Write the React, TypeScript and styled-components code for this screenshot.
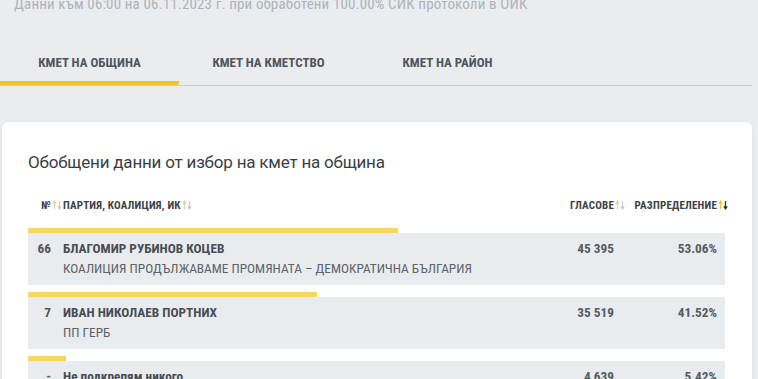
import React from "react";
import styled, { createGlobalStyle } from "styled-components";

const COND = `"Roboto Condensed", "Roboto", "Noto Sans", sans-serif`;

const GlobalStyle = createGlobalStyle`
  html, body { margin: 0; padding: 0; }
  body {
    background: #eaedf0;
    font-family: ${COND};
    font-stretch: condensed;
    overflow: hidden;
  }
`;

const Page = styled.div`
  width: 758px;
  padding-right: 6px;
  box-sizing: border-box;
`;

const Updated = styled.div`
  margin: -5px 0 0 14px;
  font-size: 15px;
  line-height: 18px;
  letter-spacing: 0.15px;
  color: #aeb3b9;
  white-space: nowrap;
`;

const TabBar = styled.nav`
  display: flex;
  margin-top: 27px;
  border-bottom: 1px solid #c9ced3;
`;

const Tab = styled.div<{ $active?: boolean }>`
  width: 179px;
  height: 45px;
  box-sizing: border-box;
  padding-top: 4px;
  display: flex;
  align-items: center;
  justify-content: center;
  font-size: 13px;
  font-weight: 700;
  color: #4f555b;
  border-bottom: 4px solid ${(p) => (p.$active ? "#f6c02c" : "transparent")};
  border-bottom-right-radius: 2px;
`;

const Card = styled.section`
  margin: 36px 0 0 2px;
  background: #fff;
  border-radius: 6px;
  box-shadow: 0 1px 4px rgba(0, 0, 0, 0.06);
  padding: 29px 27px 20px 26px;
`;

const Title = styled.h2`
  margin: 0;
  font-family: Roboto, "Noto Sans", sans-serif;
  font-stretch: normal;
  font-size: 17px;
  line-height: 22px;
  font-weight: 400;
  letter-spacing: -0.2px;
  color: #3a3f44;
`;

const Grid = styled.div`
  display: grid;
  grid-template-columns: 35px 1fr 120px 111px;
  align-items: start;
`;

const HeaderRow = styled(Grid)`
  margin-top: 26px;
  font-size: 11px;
  line-height: 14px;
  font-weight: 700;
  letter-spacing: 0.2px;
  color: #3c4146;
`;

const HeadCell = styled.div<{ $align?: "left" | "right"; $pad?: number }>`
  text-align: ${(p) => p.$align ?? "left"};
  padding-right: ${(p) => p.$pad ?? 0}px;
`;

const Sortable = styled.span`
  position: relative;
  display: inline-block;
`;

const SortIcon = styled.svg`
  position: absolute;
  left: 100%;
  top: 1px;
  margin-left: 1px;
`;

const Body = styled.div`
  display: flex;
  flex-direction: column;
  gap: 7px;
  margin-top: 15px;
`;

const Block = styled.div``;

const Bar = styled.div`
  height: 5px;
  background: #f8d460;
`;

const Row = styled(Grid)`
  background: #e9ecef;
  padding: 7px 0;
  min-height: 38px;
`;

const Num = styled.div`
  text-align: right;
  padding-right: 12px;
  font-size: 13.3px;
  line-height: 18px;
  font-weight: 700;
  color: #4f555b;
`;

const Names = styled.div`
  min-width: 0;
`;

const Name = styled.div`
  font-size: 13.3px;
  line-height: 18px;
  font-weight: 700;
  color: #474d53;
  white-space: nowrap;
`;

const Party = styled.div`
  margin-top: 2px;
  font-size: 13.3px;
  line-height: 18px;
  font-weight: 400;
  color: #5c6268;
  white-space: nowrap;
`;

const Value = styled.div<{ $pad?: number }>`
  text-align: right;
  padding-right: ${(p) => p.$pad ?? 0}px;
  font-size: 13.3px;
  line-height: 18px;
  font-weight: 700;
  color: #555b61;
`;

const Arrows = ({ up, down }: { up: string; down: string }) => (
  <SortIcon width="10" height="10" viewBox="0 0 10 10">
    <path d="M2.5 9V2M0.8 3.6L2.5 1.2L4.2 3.6" stroke={up} strokeWidth="1.3" fill="none" />
    <path d="M7.5 1V8M5.8 6.4L7.5 8.8L9.2 6.4" stroke={down} strokeWidth="1.3" fill="none" />
  </SortIcon>
);

const rows = [
  { n: "66", name: "БЛАГОМИР РУБИНОВ КОЦЕВ", party: "КОАЛИЦИЯ ПРОДЪЛЖАВАМЕ ПРОМЯНАТА – ДЕМОКРАТИЧНА БЪЛГАРИЯ", votes: "45 395", pct: 53.06 },
  { n: "7", name: "ИВАН НИКОЛАЕВ ПОРТНИХ", party: "ПП ГЕРБ", votes: "35 519", pct: 41.52 },
  { n: "-", name: "Не подкрепям никого", party: "", votes: "4 639", pct: 5.42 },
];

export default function App() {
  return (
    <Page>
      <GlobalStyle />
      <Updated>Данни към 06:00 на 06.11.2023 г. при обработени 100.00% СИК протоколи в ОИК</Updated>
      <TabBar>
        <Tab $active>КМЕТ НА ОБЩИНА</Tab>
        <Tab>КМЕТ НА КМЕТСТВО</Tab>
        <Tab>КМЕТ НА РАЙОН</Tab>
      </TabBar>
      <Card>
        <Title>Обобщени данни от избор на кмет на община</Title>
        <HeaderRow>
          <HeadCell $align="right" $pad={12}>
            <Sortable>
              №<Arrows up="#dcd3a6" down="#c9cdd1" />
            </Sortable>
          </HeadCell>
          <HeadCell>
            <Sortable>
              ПАРТИЯ, КОАЛИЦИЯ, ИК<Arrows up="#dcd3a6" down="#c9cdd1" />
            </Sortable>
          </HeadCell>
          <HeadCell $align="right">
            <Sortable>
              ГЛАСОВЕ<Arrows up="#dcd3a6" down="#c9cdd1" />
            </Sortable>
          </HeadCell>
          <HeadCell $align="right" $pad={8}>
            <Sortable>
              РАЗПРЕДЕЛЕНИЕ<Arrows up="#f4c430" down="#2f3337" />
            </Sortable>
          </HeadCell>
        </HeaderRow>
        <Body>
          {rows.map((r) => (
            <Block key={r.name}>
              <Bar style={{ width: `${r.pct}%` }} />
              <Row>
                <Num>{r.n}</Num>
                <Names>
                  <Name>{r.name}</Name>
                  {r.party && <Party>{r.party}</Party>}
                </Names>
                <Value>{r.votes}</Value>
                <Value $pad={8}>{r.pct.toFixed(2)}%</Value>
              </Row>
            </Block>
          ))}
        </Body>
      </Card>
    </Page>
  );
}
